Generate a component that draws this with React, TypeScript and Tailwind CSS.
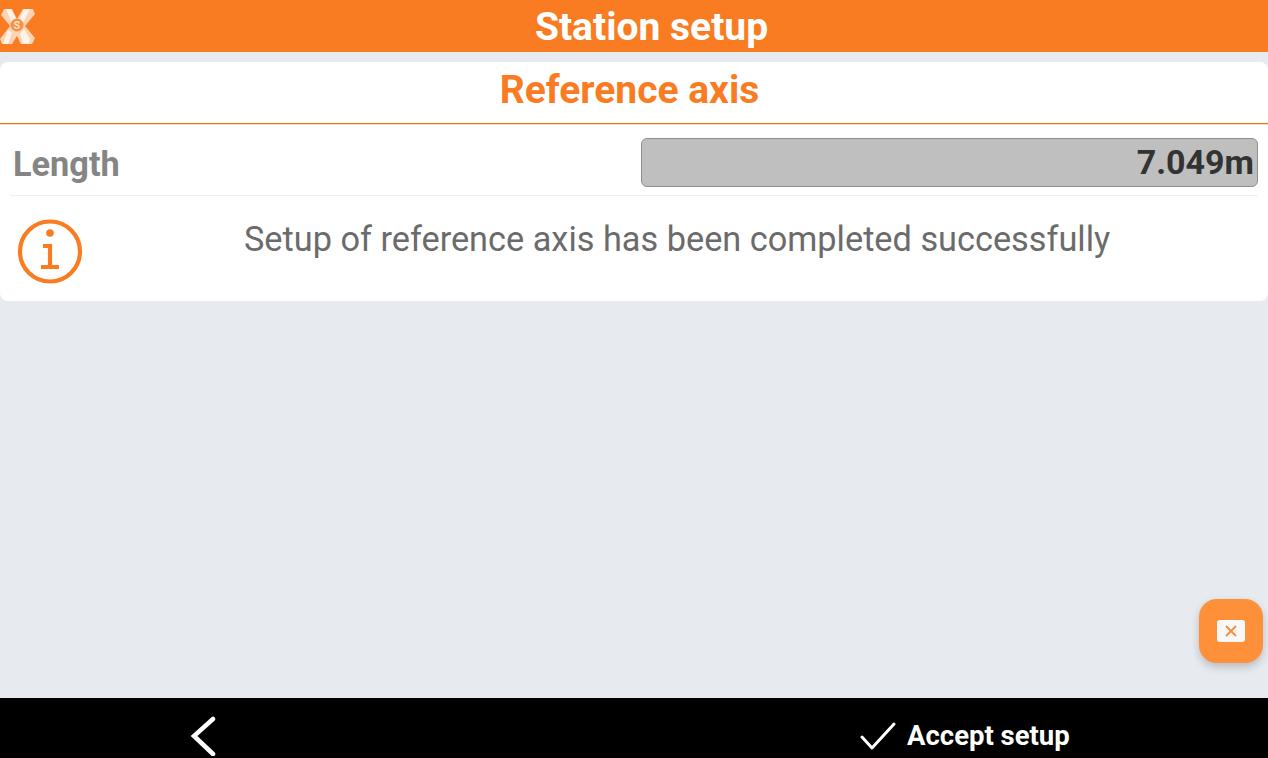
import React from 'react';

function Logo() {
  return (
    <svg viewBox="0 0 36 36" className="h-[36px] w-[36px] shrink-0">
      <polygon points="4,1 12,1 17,11 23,1 33,1 35,6 25,18 35,30 32,36 21,36 17,28 12,36 2,36 0,31 10,18 1,7" fill="#fcd3b3" />
      <polygon points="6,1 11,1 17,13 12,16" fill="#fff3e8" />
      <polygon points="24,1 30,1 23,15 19,12" fill="#fff3e8" />
      <polygon points="8,22 12,25 8,36 3,36" fill="#fff3e8" />
      <polygon points="24,21 30,31 29,36 23,36 20,26" fill="#fff3e8" />
      <circle cx="17" cy="17" r="6.5" fill="#f98f45" />
      <text x="17" y="21" textAnchor="middle" fontSize="11" fontWeight="700" fill="#fde0c8" fontFamily="Roboto, sans-serif">S</text>
    </svg>
  );
}

function InfoIcon() {
  return (
    <svg viewBox="0 0 66 66" className="h-[66px] w-[66px] shrink-0" fill="none" stroke="#f97c22" strokeWidth="4.2">
      <circle cx="33" cy="32.5" r="30" />
      <circle cx="33" cy="14" r="3.8" fill="#f97c22" stroke="none" />
      <path d="M26 27 H33 V48 M24 48 H42" />
    </svg>
  );
}

export default function App() {
  return (
    <div className="relative flex h-[758px] w-[1268px] flex-col overflow-hidden bg-[#e7eaef] font-['Roboto',sans-serif]">
      <header className="flex h-[52px] shrink-0 items-center bg-[#f97c22]">
        <Logo />
        <h1 className="flex-1 pt-[2px] pl-[35px] text-center text-[39px] font-bold leading-none text-white">
          Station setup
        </h1>
        <div className="w-[36px] shrink-0" />
      </header>

      <main className="mt-[10px] flex-1">
        <section className="rounded-[8px] bg-white">
          <div className="flex h-[62px] items-center justify-center border-b border-[#f0741c] pr-[9px] pb-[4px] shadow-[0_1px_0_#fbd3b5]">
            <h2 className="text-[39px] font-bold leading-none text-[#f97c22]">Reference axis</h2>
          </div>
          <div className="mx-[10px] flex h-[72px] items-start justify-between border-b border-[#eeeeee] pt-[14px]">
            <span className="ml-[3px] pt-[1px] text-[34.3px] leading-[50px] font-bold text-[#858585]">Length</span>
            <div className="flex h-[49px] w-[617px] items-center justify-end rounded-[6px] border border-[#8f8f8f] bg-[#bfbfbf] pr-[3px]">
              <span className="text-[34px] font-bold text-[#333333]">7.049m</span>
            </div>
          </div>
          <div className="flex h-[105px] pl-[17px]">
            <div className="pt-[23px]">
              <InfoIcon />
            </div>
            <p className="ml-[161px] pt-[20px] text-[34.3px] leading-[46px] text-[#6b6b6b]">
              Setup of reference axis has been completed successfully
            </p>
          </div>
        </section>
      </main>

      <footer className="flex h-[60px] shrink-0 items-center bg-black pt-[16px]">
        <svg viewBox="0 0 28 40" className="ml-[190px] h-[40px] w-[28px]" fill="none" stroke="white" strokeWidth="4.5" strokeLinecap="round">
          <path d="M23 3 L4 20 L23 38" />
        </svg>
        <svg viewBox="0 0 38 30" className="ml-[641px] h-[30px] w-[38px]" fill="none" stroke="white" strokeWidth="3" strokeLinecap="round" strokeLinejoin="round">
          <path d="M3 16 L13 27 L35 3" />
        </svg>
        <span className="ml-[10px] text-[27.5px] font-bold text-white">Accept setup</span>
      </footer>

      <button className="absolute left-[1199px] top-[599px] flex h-[64px] w-[64px] items-center justify-center rounded-[18px] bg-[#fd9039] shadow-[0_4px_8px_rgba(0,0,0,0.2)]">
        <span className="flex h-[22px] w-[28px] items-center justify-center rounded-[3px] bg-[#f8f8f8]">
          <svg viewBox="0 0 12 12" className="h-[12px] w-[12px]" fill="none" stroke="#fd8a35" strokeWidth="1.8">
            <path d="M1 1 L11 11 M11 1 L1 11" />
          </svg>
        </span>
      </button>
    </div>
  );
}
